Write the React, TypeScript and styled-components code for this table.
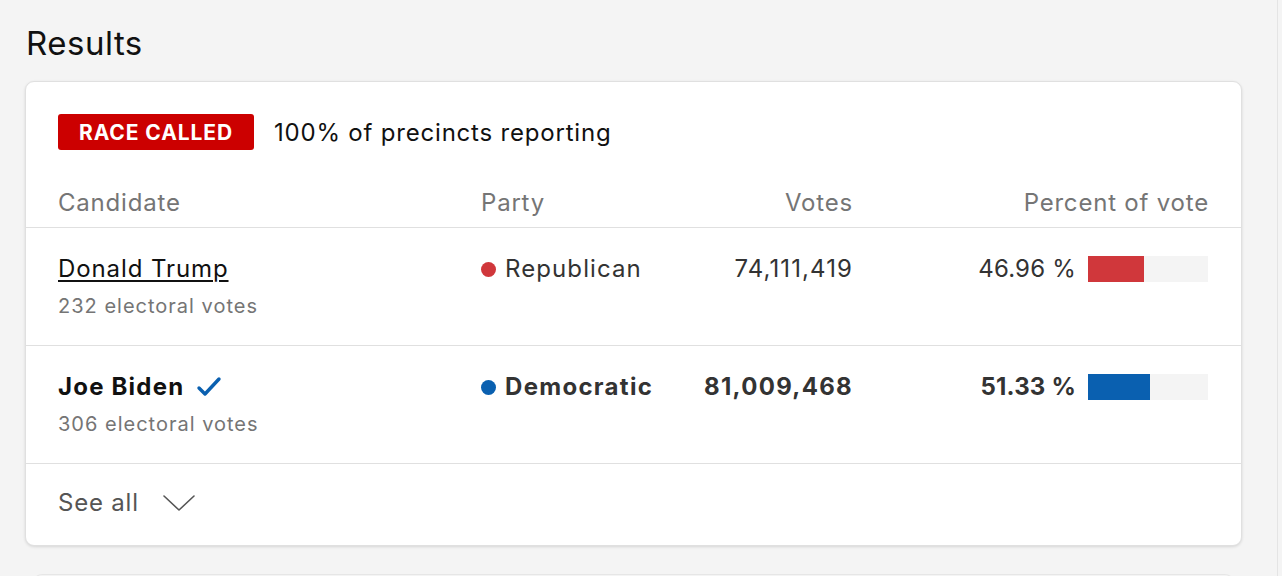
import React from "react";
import styled, { createGlobalStyle } from "styled-components";

const Global = createGlobalStyle`
  html, body { margin: 0; padding: 0; background: #f4f4f4; }
  body { font-family: Inter, "Open Sans", "Liberation Sans", sans-serif; -webkit-font-smoothing: antialiased; }
  * { box-sizing: border-box; }
`;

const Page = styled.div`
  width: 1278px;
  min-height: 576px;
  height: 576px;
  overflow: hidden;
  padding: 22px 35px 0 25px;
  border-right: 1px solid #e4e4e4;
`;

const Title = styled.h2`
  margin: 0 0 17px 1px;
  font-size: 33px;
  line-height: 42px;
  font-weight: 400;
  color: #111;
  letter-spacing: 0.5px;
`;

const Card = styled.section`
  background: #fff;
  border: 1px solid #e0e0e0;
  border-radius: 9px;
  box-shadow: 0 1px 3px rgba(0, 0, 0, 0.12);
  overflow: hidden;
`;

const StatusBar = styled.div`
  display: flex;
  align-items: center;
  gap: 20px;
  padding: 32px 32px 0;
  height: 68px;
`;

const Badge = styled.span`
  display: inline-flex;
  align-items: center;
  justify-content: center;
  width: 196px;
  height: 36px;
  background: #cc0000;
  color: #fff;
  border-radius: 3px;
  font-size: 21px;
  font-weight: 700;
  letter-spacing: 0.9px;
  padding-top: 1px;
`;

const StatusText = styled.span`
  font-size: 24px;
  color: #111;
  letter-spacing: 0.8px;
`;

const Row = styled.div<{ $head?: boolean; $height: number }>`
  display: grid;
  grid-template-columns: 423px 220px 151px 356px;
  padding: 0 32px;
  height: ${(p) => p.$height}px;
  border-bottom: 1px solid #e0e0e0;
  align-items: ${(p) => (p.$head ? "center" : "start")};
  margin-top: ${(p) => (p.$head ? "25px" : "0")};
`;

const HeadCell = styled.div<{ $right?: boolean }>`
  font-size: 24px;
  color: #757575;
  letter-spacing: 0.8px;
  text-align: ${(p) => (p.$right ? "right" : "left")};
  padding-top: 2px;
  margin-right: ${(p) => (p.$right ? "-1px" : "0")};
`;

const Cell = styled.div<{ $right?: boolean; $bold?: boolean; $tight?: boolean }>`
  padding-top: 27px;
  font-size: 24px;
  line-height: 28px;
  color: #333;
  font-weight: ${(p) => (p.$bold ? 700 : 400)};
  letter-spacing: ${(p) => (p.$tight ? "0.2px" : p.$bold ? "1.3px" : "1.1px")};
  display: flex;
  align-items: center;
  justify-content: ${(p) => (p.$right ? "flex-end" : "flex-start")};
  margin-right: ${(p) => (p.$right && !p.$tight ? "-1px" : "0")};
`;

const NameCell = styled.div`
  padding-top: 27px;
  display: flex;
  flex-direction: column;
  gap: 11px;
`;

const Name = styled.a<{ $bold?: boolean }>`
  font-size: 24px;
  line-height: 28px;
  color: #111;
  font-weight: ${(p) => (p.$bold ? 700 : 400)};
  letter-spacing: ${(p) => (p.$bold ? "1.2px" : "0.9px")};
  text-decoration: ${(p) => (p.$bold ? "none" : "underline")};
  text-underline-offset: 3px;
  text-decoration-thickness: 1.5px;
  display: flex;
  align-items: center;
  gap: 12px;
`;

const Sub = styled.span`
  font-size: 20px;
  line-height: 24px;
  color: #757575;
  letter-spacing: 1px;
`;

const Dot = styled.span<{ $color: string }>`
  width: 15px;
  height: 15px;
  border-radius: 50%;
  background: ${(p) => p.$color};
  margin-right: 9px;
  flex: none;
`;

const Track = styled.div`
  width: 120px;
  height: 26px;
  background: #f4f4f4;
  margin-left: 12px;
  display: flex;
`;

const Fill = styled.div<{ $color: string }>`
  height: 100%;
  background: ${(p) => p.$color};
`;

const Footer = styled.div`
  height: 81px;
  padding: 0 32px 4px;
  display: flex;
  align-items: center;
  gap: 23px;
  font-size: 24px;
  color: #555;
  letter-spacing: 0.8px;
`;

const NextCard = styled.div`
  margin: 28px 8px 0;
  height: 40px;
  background: #f4f4f4;
  border: 1px solid #e6e6e6;
  border-bottom: none;
  border-radius: 9px 9px 0 0;
`;

const RED = "#d0373b";
const BLUE = "#0a60b0";

const Check = () => (
  <svg width="26" height="22" viewBox="0 0 26 22" fill="none">
    <path d="M3 12 L9 18 L23 3" stroke={BLUE} strokeWidth="3.4" strokeLinecap="round" strokeLinejoin="round" />
  </svg>
);

const Chevron = () => (
  <svg width="34" height="20" viewBox="0 0 34 20" fill="none">
    <path d="M2 3 L17 17 L32 3" stroke="#555" strokeWidth="1.6" strokeLinecap="round" strokeLinejoin="round" />
  </svg>
);

const candidates = [
  { name: "Donald Trump", ev: 232, party: "Republican", color: RED, votes: "74,111,419", pct: 46.96, winner: false },
  { name: "Joe Biden", ev: 306, party: "Democratic", color: BLUE, votes: "81,009,468", pct: 51.33, winner: true },
];

export default function App() {
  return (
    <>
      <Global />
      <Page>
        <Title>Results</Title>
        <Card>
          <StatusBar>
            <Badge>RACE CALLED</Badge>
            <StatusText>100% of precincts reporting</StatusText>
          </StatusBar>
          <Row $head $height={53}>
            <HeadCell>Candidate</HeadCell>
            <HeadCell>Party</HeadCell>
            <HeadCell $right>Votes</HeadCell>
            <HeadCell $right>Percent of vote</HeadCell>
          </Row>
          {candidates.map((c) => (
            <Row key={c.name} $height={118}>
              <NameCell>
                <Name $bold={c.winner}>
                  {c.name}
                  {c.winner && <Check />}
                </Name>
                <Sub>{c.ev} electoral votes</Sub>
              </NameCell>
              <Cell $bold={c.winner}>
                <Dot $color={c.color} />
                {c.party}
              </Cell>
              <Cell $right $bold={c.winner}>{c.votes}</Cell>
              <Cell $right $tight $bold={c.winner}>
                {c.pct.toFixed(2)} %
                <Track>
                  <Fill $color={c.color} style={{ width: `${c.pct * 1.2}px` }} />
                </Track>
              </Cell>
            </Row>
          ))}
          <Footer>
            See all
            <Chevron />
          </Footer>
        </Card>
        <NextCard />
      </Page>
    </>
  );
}
